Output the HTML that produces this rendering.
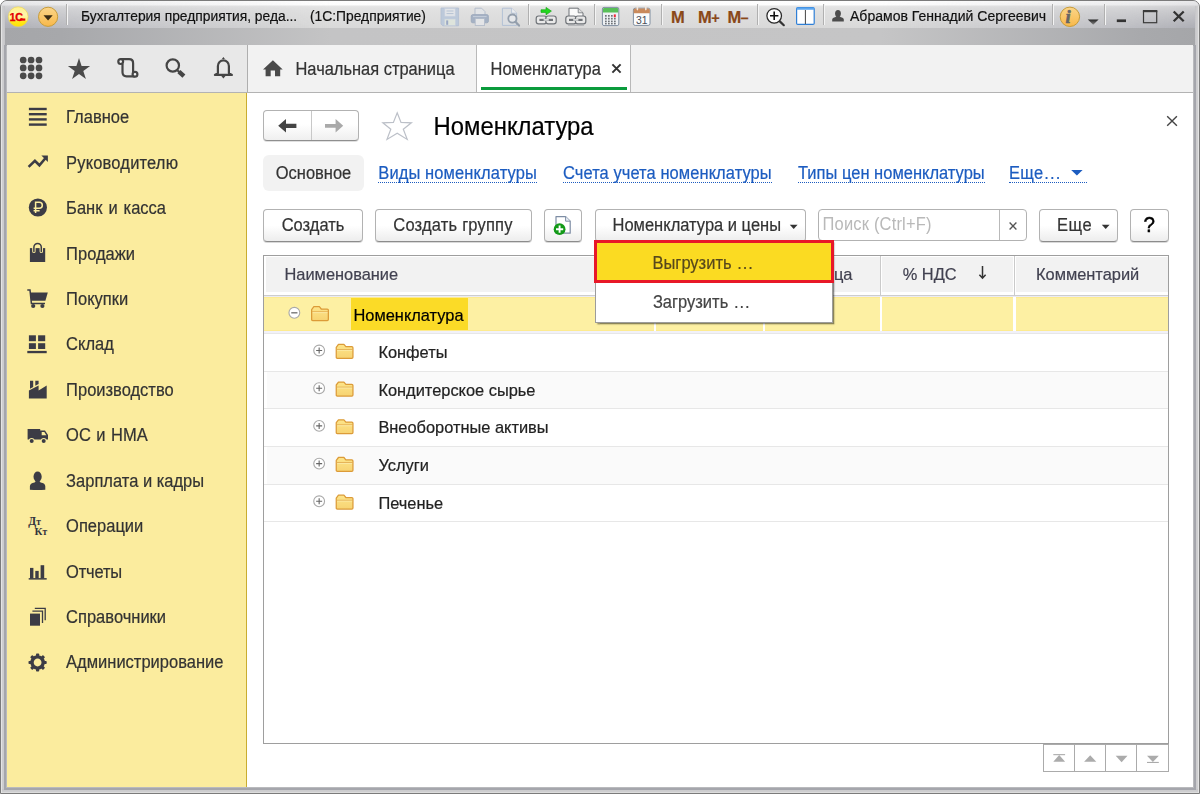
<!DOCTYPE html>
<html lang="ru">
<head>
<meta charset="utf-8">
<title>Номенклатура</title>
<style>
*{box-sizing:border-box;margin:0;padding:0}
html,body{width:1200px;height:794px;overflow:hidden;background:#fff}
body{font-family:"Liberation Sans",sans-serif;font-size:16.3px;color:#333;position:relative;-webkit-text-stroke:.2px}
.abs{position:absolute}
.t{display:inline-block;line-height:1.149;transform:scaleY(1.06);transform-origin:0 78.8%;white-space:nowrap}
#frame{position:absolute;left:0;top:0;width:1200px;height:794px;background:#b9babd;border:1px solid #7b7b7b;border-radius:7px 7px 0 0;overflow:hidden}
#frameL{position:absolute;left:0;top:5px;width:4px;height:787px;background:linear-gradient(90deg,#e4e4e4 0,#e4e4e4 1px,#cfcfd1 1px,#cbcbcd 3px,#c4c4c7 4px)}
#frameL2{position:absolute;left:3px;top:44px;width:1192.4px;height:745.4px;border:2.6px solid #a5a6ac;border-top:0}
#frameR{position:absolute;left:1194.4px;top:5px;width:3.6px;height:787px;background:linear-gradient(90deg,#c4c4c7 0,#cbcbcd 1px,#cfcfd1 2.6px,#e4e4e4 2.6px,#e4e4e4 3.6px)}
#frameB{position:absolute;left:1px;top:788px;width:1196px;height:4px;background:linear-gradient(180deg,#c4c4c7 0,#cbcbcd 1px,#cfcfd1 3px,#dcdcdc 3px,#dcdcdc 4px)}
#titleA{position:absolute;left:0;top:0;width:1198px;height:28px;background:linear-gradient(180deg,#fefefe 0,#fdfdfd 4px,#e6e6e6 5px,#e1e1e1 8px,#d9d9d9 27px)}
#titleAh{position:absolute;left:0;top:0;width:1198px;height:28px;background:linear-gradient(90deg,rgba(172,173,180,1) 0,rgba(178,179,186,.72) 70px,rgba(190,191,196,0) 330px,rgba(190,191,196,0) 880px,rgba(178,179,186,.72) 1130px,rgba(172,173,180,1) 1198px);-webkit-mask-image:linear-gradient(180deg,rgba(0,0,0,.25) 0,rgba(0,0,0,.35) 5px,#000 27px);mask-image:linear-gradient(180deg,rgba(0,0,0,.25) 0,rgba(0,0,0,.35) 5px,#000 27px)}
#titleB{position:absolute;left:0;top:27px;width:1198px;height:18px;background:linear-gradient(90deg,#a5a6a9 0,#a7a8ab 60px,#c4c4c5 330px,#c5c5c6 880px,#a8a9ac 1140px,#a5a6a9 1198px)}
.ttext{position:absolute;top:6.2px;font-size:15.2px;color:#111;white-space:nowrap;line-height:20px;transform:scaleX(.91);transform-origin:0 0}

#toolbar{position:absolute;left:6.5px;top:45.3px;width:1186.7px;height:47.8px;background:#f2f2f2;border-bottom:1px solid #b3b3b3}
#tbLeft{position:absolute;left:0;top:0;width:241.5px;height:47px;background:#e8e8e8;border-right:1px solid #aeaeae}
.tab{position:absolute;top:0;height:46.8px;font-size:16.45px;line-height:49.8px;white-space:nowrap;color:#333}
#tab2{left:469.6px;width:155.2px;background:#fff;border-left:1px solid #b9b9b9;border-right:1px solid #b9b9b9}
#tab2u{position:absolute;left:4px;top:42px;width:146px;height:2.4px;background:#0a9b3c}

#side{position:absolute;left:6.5px;top:93.1px;width:240.5px;height:694.4px;background:#fbec9e;border-right:1.5px solid #c9ad30}
.si{position:absolute;left:59.6px;margin-top:-0.6px;height:24px;line-height:24px;font-size:16.5px;color:#333;white-space:nowrap}
#main{position:absolute;left:247px;top:93px;width:946.2px;height:694px;background:#fff}
#nav{position:absolute;left:16px;top:16.5px;width:96px;height:31px;border:1px solid #b2b2b2;border-bottom-color:#8f8f8f;border-radius:4px;background:linear-gradient(180deg,#fff 0,#fff 45%,#efefef 100%);box-shadow:0 1px 0 rgba(0,0,0,.12)}
#navdiv{position:absolute;left:47px;top:0;width:1px;height:29px;background:#c8c8c8}
#ptitle{position:absolute;left:186.6px;top:18.9px;font-size:23.85px;line-height:30px;color:#000;white-space:nowrap}
#pill{position:absolute;left:16px;top:62px;width:101px;height:36px;border-radius:6px;background:#f2f2f2;text-align:center;line-height:36px;font-size:16.5px;color:#333}
.lnk{position:absolute;top:69px;height:20.8px;line-height:22px;font-size:16.5px;color:#1c5cc0;white-space:nowrap;border-bottom:1.3px dotted #1c5cc0}
.btn{position:absolute;top:115.5px;height:33px;border:1px solid #b2b2b2;border-bottom-color:#8c8c8c;border-radius:4px;background:linear-gradient(180deg,#fff 0,#fff 50%,#ededed 100%);box-shadow:0 1px 0 rgba(0,0,0,.15);text-align:center;line-height:30.4px;font-size:16.5px;color:#333;white-space:nowrap}
#search{position:absolute;left:571px;top:116px;width:208.5px;height:32px;border:1px solid #b2b2b2;border-radius:4px;background:#fff}
#search>span{position:absolute;left:3.6px;top:0;line-height:29px;font-size:16.5px;color:#b9b9b9;white-space:nowrap;letter-spacing:.17px;-webkit-text-stroke:0}
#sdiv{position:absolute;left:180px;top:0;width:1px;height:30px;background:#b9b9b9}
#table{position:absolute;left:15.7px;top:161.9px;width:906.7px;height:489.2px;border:1px solid #9e9e9e;background:#fff;overflow:hidden}
#tin{position:absolute;left:-.2px;top:.6px;width:905px;height:488px}
#thead{position:absolute;left:0;top:0;width:905px;height:37px;background:#fff}
.th{position:absolute;top:0;height:37px;line-height:34.8px;font-size:16.4px;color:#414150;white-space:nowrap;background:#f2f2f2;border:1px solid #fff;border-top-width:1.3px;border-bottom-width:.8px}
.thsep{position:absolute;top:0;width:1px;height:39px;background:#cacaca}
#hline{position:absolute;left:0;top:38.3px;width:905px;height:1.1px;background:#cdcdcd}
#hline2{position:absolute;left:0;top:39.4px;width:905px;height:1.4px;background:#ececf4}
#selrow{position:absolute;left:0;top:40.8px;width:904px;height:33.8px}
.sc{position:absolute;top:0;height:33.8px;background:#fdf0a3;box-shadow:inset 0 1px 0 #fdeb90,inset 0 -1px 0 #fdeb90}
#selcell{position:absolute;left:87.5px;top:1px;width:117px;height:32px;background:#fbdb27;line-height:34.7px;font-size:16.4px;color:#000;padding-left:2.5px;white-space:nowrap}
#sline{position:absolute;left:0;top:74.8px;width:905px;height:1.7px;background:#f1f1f9}
.tr{position:absolute;left:0;width:905px;height:37.65px;border-top:1px solid #e7e7e7;line-height:37.3px;font-size:16.4px;color:#222;padding-left:114.9px;white-space:nowrap}
.tr.alt{background:linear-gradient(90deg,#fff 0,#fff 2.5px,#fafafa 2.5px)}
#scrollbtns{position:absolute;left:795.7px;top:650.6px;width:126px;height:29px}
.sb{position:absolute;top:0;width:32.4px;height:28.3px;border:1.2px solid #ababab;border-right:0;background:#fff}
#menu{position:absolute;left:347.5px;top:147px;width:238.5px;height:82.5px;background:#fff;border:1px solid #9c9c9c;box-shadow:1.5px 1.5px 1.5px rgba(0,0,0,.45)}
#mi1{position:absolute;left:-1.4px;top:-0.7px;width:239.6px;height:42.3px;border:3px solid #e81828;background:#fbdb22;line-height:41.4px;padding-left:55.4px;word-spacing:1.2px;font-size:16.5px;color:#57481c;white-space:nowrap}
#mi2{position:absolute;left:0;top:41px;width:236px;height:40px;line-height:40.4px;padding-left:57.4px;word-spacing:1.2px;font-size:16.5px;color:#444;white-space:nowrap}
#titlec{position:absolute;left:0;top:0;width:1200px;height:46px}
.mtext{position:absolute;top:7px;font-size:16.5px;font-weight:bold;color:#8a4818;line-height:20px;white-space:nowrap;letter-spacing:-0.3px}
</style>
</head>
<body>
<div id="frame">
 <div id="titleA"></div><div id="titleAh"></div>
 <div id="titleB"></div>
 <div id="frameL"></div><div id="frameR"></div><div id="frameB"></div><div id="frameL2"></div>
 <!--TITLE-->
</div>
<div id="titlec">
<svg class="abs" style="left:0;top:0" width="1200" height="46" viewBox="0 0 1200 46">
<defs>
<linearGradient id="g1c" x1="0" y1="0" x2="0" y2="1"><stop offset="0" stop-color="#fff08a"/><stop offset="0.4" stop-color="#fff6aa"/><stop offset="0.68" stop-color="#fff080"/><stop offset="0.74" stop-color="#ffe81c"/><stop offset="1" stop-color="#ffe000"/></linearGradient>
<linearGradient id="gor" x1="0" y1="0" x2="0" y2="1"><stop offset="0" stop-color="#fbd68a"/><stop offset="1" stop-color="#f8b84a"/></linearGradient>
<linearGradient id="gtri" x1="0" y1="0" x2="0" y2="1"><stop offset="0" stop-color="#222"/><stop offset="1" stop-color="#888"/></linearGradient>
</defs>
<!-- 1C logo -->
<circle cx="18.2" cy="16.7" r="9.9" fill="url(#g1c)" stroke="#f0d64a" stroke-width="0.6"/>
<text x="9.6" y="20.8" font-family="Liberation Sans,sans-serif" font-weight="bold" font-size="11" fill="#e40000" stroke="#e40000" stroke-width="0.25">1</text>
<text x="15.2" y="20.6" font-family="Liberation Sans,sans-serif" font-weight="bold" font-size="10.6" fill="#e40000" stroke="#e40000" stroke-width="0.4">С</text>
<path d="M19.9 19.6 L25.3 19.6" fill="none" stroke="#e40000" stroke-width="2.2"/>
<!-- orange dropdown -->
<circle cx="48.1" cy="16.8" r="9.6" fill="url(#gor)" stroke="#c79c3a" stroke-width="1"/>
<path d="M43.5 15.2 L52.7 15.2 L48.1 20.5 Z" fill="#3a2c14"/>
<!-- separators -->
<g stroke="#b0b0b0" stroke-width="1"><path d="M66.5 4 V25 M528.5 4 V25 M594.5 4 V25 M661.5 4 V25 M757.5 4 V25 M823.5 4 V25 M1052.5 4 V25 M1104.5 4 V25"/></g>
<g stroke="#f4f4f4" stroke-width="1"><path d="M67.5 4 V25 M529.5 4 V25 M595.5 4 V25 M662.5 4 V25 M758.5 4 V25 M824.5 4 V25 M1053.5 4 V25 M1105.5 4 V25"/></g>
<!-- save (disabled) -->
<g opacity="0.85"><path d="M441 8 H458.6 V25.8 H442.8 L441 24 Z" fill="#b7c6da" stroke="#a9b9cf" stroke-width="0.8"/>
<rect x="444.8" y="8.6" width="10.4" height="7.6" fill="#e3e6ea" stroke="#c3cedd" stroke-width="0.6"/><path d="M446.5 11 H453.5 M446.5 13.6 H453.5" stroke="#aebdd2" stroke-width="1"/>
<rect x="444.6" y="19" width="10.8" height="6.4" fill="#dfe6dd" stroke="#c3cedd" stroke-width="0.6"/><rect x="446.2" y="20.4" width="2" height="4.4" fill="#8f9fc0"/></g>
<!-- print (disabled) -->
<g opacity="0.9"><path d="M475 15 V8.2 H481.6 L485 11.6 V15" fill="#e3e5e8" stroke="#aab5c6" stroke-width="0.9"/>
<rect x="471.2" y="14.6" width="17.2" height="8.2" rx="1.6" fill="#9fadc2" stroke="#93a2b8" stroke-width="0.8"/><path d="M473 16.6 H486.6" stroke="#c5cfdc" stroke-width="1"/>
<rect x="475.2" y="18.6" width="9.4" height="6.8" fill="#e4e6e9" stroke="#aab5c6" stroke-width="0.8"/></g>
<!-- preview (disabled) -->
<g opacity="0.9"><path d="M502.4 8.2 H511.6 L516.6 13.2 V25.4 H502.4 Z" fill="#dcdfe3" stroke="#a9bad2" stroke-width="0.9"/><path d="M511.6 8.2 V13.2 H516.6" fill="#eef0f3" stroke="#a9bad2" stroke-width="0.8"/>
<circle cx="512.4" cy="18.6" r="4.1" fill="#e8eaed" stroke="#8d99a8" stroke-width="1.8"/><path d="M515.4 21.8 L519 25.6" stroke="#8d99a8" stroke-width="2.2" stroke-linecap="round"/></g>
<!-- link with green arrow -->
<path d="M541 9.8 H546 V7.4 L551.4 11.1 L546 14.8 V12.4 H541 Z" fill="#22d81e" stroke="#18a818" stroke-width="0.7"/>
<g fill="#e9e9e9" stroke="#6f7378" stroke-width="1.2"><rect x="536.2" y="16" width="10.4" height="7.8" rx="2.4"/><rect x="545.8" y="16" width="10.4" height="7.8" rx="2.4"/></g>
<path d="M539.4 19.9 H553" stroke="#6f7378" stroke-width="2.2"/><path d="M543.6 19.9 H548.8" stroke="#f2f2f2" stroke-width="1.4"/>
<!-- link with doc -->
<path d="M569 17 V8.2 H578.2 L583 12.8 V17" fill="#fafafa" stroke="#6f7378" stroke-width="1"/><path d="M578.2 8.2 V12.8 H583" fill="#dedede" stroke="#6f7378" stroke-width="0.8"/>
<g fill="#e9e9e9" stroke="#6f7378" stroke-width="1.2"><rect x="565.8" y="16" width="10.4" height="7.8" rx="2.4"/><rect x="575.4" y="16" width="10.4" height="7.8" rx="2.4"/></g>
<path d="M569 19.9 H582.6" stroke="#6f7378" stroke-width="2.2"/><path d="M573.2 19.9 H578.4" stroke="#f2f2f2" stroke-width="1.4"/>
<path d="M568 25.2 H584" stroke="#9a9da2" stroke-width="0.8"/>
<!-- calculator -->
<rect x="602.4" y="7.4" width="16.4" height="18.2" rx="1.6" fill="#eef1f4" stroke="#7f8ea0" stroke-width="1"/>
<path d="M603 9 Q603 8 604 8 H617.2 Q618.2 8 618.2 9 V12.6 H603 Z" fill="#58bf58"/>
<g fill="#6f7378"><rect x="605" y="15" width="1.7" height="1.7"/><rect x="608" y="15" width="1.7" height="1.7"/><rect x="611" y="15" width="1.7" height="1.7"/>
<rect x="605" y="17.8" width="1.7" height="1.7"/><rect x="608" y="17.8" width="1.7" height="1.7"/><rect x="611" y="17.8" width="1.7" height="1.7"/><rect x="614" y="17.8" width="1.7" height="1.7"/>
<rect x="605" y="20.6" width="1.7" height="1.7"/><rect x="608" y="20.6" width="1.7" height="1.7"/><rect x="611" y="20.6" width="1.7" height="1.7"/><rect x="614" y="20.6" width="1.7" height="1.7"/>
<rect x="605" y="23" width="1.7" height="1.4"/><rect x="608" y="23" width="1.7" height="1.4"/><rect x="611" y="23" width="1.7" height="1.4"/><rect x="614" y="23" width="1.7" height="1.4"/></g>
<rect x="613.8" y="14.4" width="2" height="2.8" fill="#f0283a"/>
<!-- calendar -->
<rect x="633.4" y="8.2" width="16.6" height="17.2" rx="1.8" fill="#fbfcfd" stroke="#7f8ea0" stroke-width="1"/>
<path d="M633.6 13.2 V10 Q633.6 8.4 635.2 8.4 H648.2 Q649.8 8.4 649.8 10 V13.2 Z" fill="#c98a5c"/>
<path d="M637.4 6.6 V9.6 M645.8 6.6 V9.6" stroke="#f3e6da" stroke-width="1.6" stroke-linecap="round"/>
<text x="636" y="23.6" font-family="Liberation Sans,sans-serif" font-size="10.4" fill="#4a4f58">31</text>
<!-- zoom -->
<circle cx="774.2" cy="15.8" r="7.3" fill="#fdfdfd" stroke="#2a2a2a" stroke-width="1.25"/>
<path d="M770 15.8 H778.4 M774.2 11.6 V20" stroke="#111" stroke-width="1.6"/>
<path d="M779.8 21.4 L783.8 25.2" stroke="#333" stroke-width="2.2" stroke-linecap="round"/>
<!-- window -->
<rect x="796.6" y="7.6" width="17.6" height="16.8" rx="1.2" fill="#fff" stroke="#2f7fd6" stroke-width="1.2"/>
<path d="M796.6 9.8 V8.8 Q796.6 7.4 797.8 7.4 H813 Q814.2 7.4 814.2 8.8 V9.8 Z" fill="#5aa6f0"/>
<path d="M805.4 10 V24" stroke="#444" stroke-width="1"/>
<!-- user -->
<g fill="#4c4c4c"><ellipse cx="838" cy="13.6" rx="2.9" ry="3.5"/><path d="M832.2 21.6 V19.6 Q832.2 17.6 835.6 17 L836.6 16 H839.4 L840.4 17 Q843.8 17.6 843.8 19.6 V21.6 Z"/></g>
<!-- info -->
<circle cx="1069.9" cy="16.8" r="9.7" fill="url(#gor)" stroke="#c79c3a" stroke-width="1"/>
<text x="1065.6" y="23" font-family="Liberation Serif,serif" font-style="italic" font-weight="bold" font-size="18.5" fill="#666" stroke="#666" stroke-width="0.6">i</text>
<path d="M1087.8 19.4 H1098.6 L1093.2 24.8 Z" fill="url(#gtri)"/>
<!-- window controls -->
<rect x="1116.8" y="19.4" width="9.2" height="2.7" fill="#333"/>
<rect x="1143.5" y="11.4" width="13.2" height="11.3" fill="none" stroke="#3a3a3a" stroke-width="1.2"/><rect x="1142.9" y="10" width="14.4" height="2.2" fill="#3a3a3a"/>
<path d="M1173.7 11.5 L1183.7 21.3 M1183.7 11.5 L1173.7 21.3" stroke="#333" stroke-width="2.3"/>

</svg>
<div class="ttext" style="left:81px">Бухгалтерия предприятия, реда...</div>
<div class="ttext" style="left:309.5px">(1С:Предприятие)</div>
<div class="ttext" style="left:849.5px;transform:scaleX(.924)">Абрамов Геннадий Сергеевич</div>
<div class="mtext" style="left:671px">M</div>
<div class="mtext" style="left:698px">M<span style="font-size:14.5px;position:relative;top:-.4px;margin-left:-.3px">+</span></div>
<div class="mtext" style="left:727.5px">M<span style="font-size:14px;position:relative;top:-.2px;margin-left:-.6px">−</span></div>
</div>
<div id="toolbar">
 <div id="tbLeft"></div>
 <svg class="abs" style="left:0;top:0" width="300" height="47" viewBox="6.5 45.3 300 47">
<g fill="#4a4a4a">
<circle cx="22.7" cy="60.3" r="3.35"/><circle cx="30.6" cy="60.3" r="3.35"/><circle cx="38.5" cy="60.3" r="3.35"/>
<circle cx="22.7" cy="68.2" r="3.35"/><circle cx="30.6" cy="68.2" r="3.35"/><circle cx="38.5" cy="68.2" r="3.35"/>
<circle cx="22.7" cy="76.1" r="3.35"/><circle cx="30.6" cy="76.1" r="3.35"/><circle cx="38.5" cy="76.1" r="3.35"/>
<path d="M78.5 58.3 L81.1 66.3 L89.6 66.3 L82.8 71.3 L85.4 79.4 L78.5 74.4 L71.6 79.4 L74.2 71.3 L67.4 66.3 L75.9 66.3 Z"/>
<!-- home -->
<path d="M272.4 60.6 L282.2 69.7 L279.7 69.7 L279.7 76.5 L274.5 76.5 L274.5 70.8 L270.2 70.8 L270.2 76.5 L265.1 76.5 L265.1 69.7 L262.5 69.7 Z"/>
</g>
<g fill="none" stroke="#454545" stroke-width="2.2">
<!-- scroll -->
<path d="M120.2 59.5 L128.6 59.5 Q132.6 59.5 132.6 63.5 L132.6 72.4"/>
<path d="M134.6 76.6 L126 76.6 Q122 76.6 122 72.6 L122 64.2"/>
<circle cx="120.2" cy="61.9" r="2.4" fill="#f4f4f4"/><circle cx="134.5" cy="74.6" r="2.4" fill="#f4f4f4"/>
<!-- search -->
<circle cx="172.3" cy="65.8" r="6.2"/>
<path d="M177.2 70.9 L179 72.6" stroke-width="2.2"/><path d="M178.4 72 L183.4 76.5" stroke-width="4.4"/>
<!-- bell -->
<path d="M217.4 73.4 L217.4 66.2 A5.5 5.5 0 0 1 228.4 66.2 L228.4 73.4 L231.4 75.2 L214.4 75.2 Z" stroke-linejoin="round"/>
</g>
<path d="M221.4 59.2 L222.9 57.2 L224.4 59.2 Z M220.6 76 L225.2 76 L222.9 78.8 Z" fill="#454545"/>
</svg>
<div class="tab" style="left:289px"><span class="t">Начальная страница</span></div>
<div class="tab" id="tab2" style="padding-left:13.5px"><span class="t">Номенклатура</span><div id="tab2u"></div>
<svg class="abs" style="left:134px;top:18px" width="11" height="11" viewBox="0 0 11 11"><path d="M1.4 1.4 L9.6 9.6 M9.6 1.4 L1.4 9.6" stroke="#333" stroke-width="2" fill="none"/></svg></div>

</div>
<div id="side">
<div class="si" style="top:12.8px"><span class="t">Главное</span></div>
<div class="si" style="top:58.2px;letter-spacing:.17px"><span class="t">Руководителю</span></div>
<div class="si" style="top:103.6px;word-spacing:1.4px"><span class="t">Банк и касса</span></div>
<div class="si" style="top:149.1px"><span class="t">Продажи</span></div>
<div class="si" style="top:194.5px"><span class="t">Покупки</span></div>
<div class="si" style="top:239.9px"><span class="t">Склад</span></div>
<div class="si" style="top:285.3px"><span class="t">Производство</span></div>
<div class="si" style="top:330.7px;word-spacing:.9px"><span class="t">ОС и НМА</span></div>
<div class="si" style="top:376.2px"><span class="t">Зарплата и кадры</span></div>
<div class="si" style="top:421.6px"><span class="t">Операции</span></div>
<div class="si" style="top:467px;letter-spacing:-.2px"><span class="t">Отчеты</span></div>
<div class="si" style="top:512.4px"><span class="t">Справочники</span></div>
<div class="si" style="top:557.8px"><span class="t">Администрирование</span></div>
<svg class="abs" style="left:0;top:0" width="60" height="694" viewBox="7 93.1 60 694">
<g fill="#3c3c45" stroke="none">
<!-- hamburger -->
<rect x="28.9" y="107.9" width="17.8" height="2.4"/><rect x="28.9" y="113.1" width="17.8" height="2.4"/><rect x="28.9" y="118.3" width="17.8" height="2.4"/><rect x="28.9" y="123.5" width="17.8" height="2.4"/>
<!-- trend -->
<path d="M28.6 167 L34.9 161 L39.4 165.4 L45.2 158.6" fill="none" stroke="#3c3c45" stroke-width="2.6" stroke-linejoin="miter"/>
<path d="M41.4 155.6 L47.9 155.6 L47.9 162.2 Z"/>
<!-- ruble -->
<circle cx="37.9" cy="207.6" r="9.1"/>
<path d="M35.6 213.2 L35.6 202.4 L39.3 202.4 A3 3 0 0 1 39.3 208.4 L33.6 208.4 M33.6 210.9 L39.6 210.9" fill="none" stroke="#fbed9e" stroke-width="1.5"/>
<!-- bag -->
<rect x="29.9" y="248.2" width="15.3" height="13.9"/>
<path d="M33.9 251.5 L33.9 247.3 A3.7 3.7 0 0 1 41.3 247.3 L41.3 251.5" fill="none" stroke="#fbed9e" stroke-width="3.4" stroke-linecap="round"/>
<path d="M33.9 251.5 L33.9 247.3 A3.7 3.7 0 0 1 41.3 247.3 L41.3 251.5" fill="none" stroke="#3c3c45" stroke-width="1.5" stroke-linecap="round"/>
<!-- cart -->
<path d="M27.3 290.2 L30 290.2 L31.4 303.6 L45 303.6" fill="none" stroke="#3c3c45" stroke-width="1.5"/>
<path d="M30.2 292.6 L47.8 292.6 L45.4 300.9 L31 300.9 Z"/>
<circle cx="33.2" cy="306.1" r="2.1"/><circle cx="42.4" cy="306.1" r="2.1"/>
<!-- warehouse -->
<rect x="28.9" y="335.4" width="7" height="5.9"/><rect x="38.1" y="335.4" width="7.1" height="5.9"/><rect x="28.9" y="343.3" width="7" height="5.8"/><rect x="38.1" y="343.3" width="7.1" height="5.8"/><rect x="27.3" y="351" width="19.4" height="2.3"/>
<!-- factory -->
<path d="M28.9 398.7 L28.9 390.6 L38.6 385.6 L38.6 390.7 L46.7 385.6 L46.7 398.7 Z"/>
<path d="M30 380.9 L33.2 380.9 L33.2 387.2 L30 388.9 Z"/><path d="M35.3 380.9 L38.6 380.9 L38.6 384 L35.3 385.8 Z"/>
<!-- truck -->
<path d="M27.6 429 L40.2 429 L40.2 430.6 L45 430.6 L48 435 L48 439.7 L27.6 439.7 Z"/>
<path d="M41.7 432.2 L44.3 432.2 L46.4 435.4 L41.7 435.4 Z" fill="#fbed9e"/>
<circle cx="31.7" cy="441" r="2.9" fill="#fbed9e"/><circle cx="43.7" cy="441" r="2.9" fill="#fbed9e"/>
<circle cx="31.7" cy="441" r="2" /><circle cx="43.7" cy="441" r="2"/>
<!-- person -->
<ellipse cx="37.6" cy="476.8" rx="4.1" ry="5.1"/>
<path d="M29.9 489.8 L29.9 486.3 Q29.9 483.4 34.6 482.6 L35.8 481.2 L39.4 481.2 L40.6 482.6 Q45.3 483.4 45.3 486.3 L45.3 489.8 Q37.6 490.6 29.9 489.8 Z"/>
<!-- reports -->
<rect x="30" y="568" width="3.4" height="10.6"/><rect x="35.3" y="571" width="3.4" height="7.6"/><rect x="40.6" y="565.3" width="3.6" height="13.3"/><rect x="28.7" y="578.2" width="18" height="1.5"/>
<!-- docs -->
<rect x="30" y="613.7" width="10" height="12.1"/>
<path d="M32.4 611.2 L42.5 611.2 L42.5 623" fill="none" stroke="#3c3c45" stroke-width="1.3"/>
<path d="M34.8 608.5 L45.2 608.5 L45.2 620.4" fill="none" stroke="#3c3c45" stroke-width="1.3"/>
<!-- gear -->
<g transform="translate(37.6 662.6)">
<circle r="5.6" fill="none" stroke="#3c3c45" stroke-width="3.4"/>
<g id="tooth"><rect x="-1.6" y="-9.1" width="3.2" height="3" rx="0.8"/></g>
<use href="#tooth" transform="rotate(45)"/><use href="#tooth" transform="rotate(90)"/><use href="#tooth" transform="rotate(135)"/><use href="#tooth" transform="rotate(180)"/><use href="#tooth" transform="rotate(225)"/><use href="#tooth" transform="rotate(270)"/><use href="#tooth" transform="rotate(315)"/>
</g>
</g>
<text x="28.3" y="525.6" font-family="Liberation Serif,serif" font-weight="bold" font-size="11.5" fill="#33333c">Д<tspan font-size="9.5">т</tspan></text>
<text x="34.6" y="535.6" font-family="Liberation Serif,serif" font-weight="bold" font-size="11" fill="#33333c">К<tspan font-size="9.5">т</tspan></text>
</svg>

</div>
<div id="main">
<div id="nav"><div id="navdiv"></div>
<svg class="abs" style="left:-1px;top:-1px" width="96" height="31" viewBox="263 109.5 96 31"><path d="M278.2 125.3 L286 118.6 L286 123.2 L296.4 123.2 L296.4 127.4 L286 127.4 L286 132 Z" fill="#444"/><path d="M343.2 125.3 L335.6 118.6 L335.6 123.4 L325 123.4 L325 127.2 L335.6 127.2 L335.6 132 Z" fill="#a9a9a9"/></svg></div>
<svg class="abs" style="left:133px;top:17px" width="34" height="32" viewBox="380 110 34 32"><path d="M397.2 112.8 L401 122.4 L411.4 122.8 L403.3 129.3 L407.2 139.4 L397.2 133.2 L387 139.4 L390.8 129.3 L382.8 122.8 L393.4 122.4 Z" fill="#fff" stroke="#bcc0c8" stroke-width="1.2" stroke-linejoin="miter"/></svg>
<div id="ptitle"><span class="t">Номенклатура</span></div>
<svg class="abs" style="left:919px;top:22.4px" width="12" height="12" viewBox="0 0 12 12"><path d="M1.2 1.2 L10.9 10.8 M10.9 1.2 L1.2 10.8" stroke="#444" stroke-width="1.4" fill="none"/></svg>

<div id="pill"><span class="t">Основное</span></div>
<a class="lnk" style="left:131.3px;letter-spacing:.1px"><span class="t">Виды номенклатуры</span></a>
<a class="lnk" style="left:316px;letter-spacing:.06px"><span class="t">Счета учета номенклатуры</span></a>
<a class="lnk" style="left:551px"><span class="t">Типы цен номенклатуры</span></a>
<a class="lnk" style="left:762px;width:77.5px;letter-spacing:.3px"><span class="t">Еще<span style="letter-spacing:1.1px;margin-left:.8px">...</span></span></a>
<svg class="abs" style="left:823.6px;top:77px" width="12" height="6" viewBox="0 0 12 6"><path d="M0.2 0 L11.6 0 L5.9 5.6 Z" fill="#1c5cc0"/></svg>

<div class="btn" style="left:16px;width:100px"><span class="t">Создать</span></div>
<div class="btn" style="left:127.5px;width:157px;letter-spacing:.19px"><span class="t">Создать группу</span></div>
<div class="btn" style="left:297px;width:38px"></div>
<svg class="abs" style="left:305px;top:120px" width="24" height="24" viewBox="552 213 24 24">
<path d="M556 216.6 H565.6 L570.2 221.2 V233.2 H556 Z" fill="#fff" stroke="#7d8da4" stroke-width="1.2" stroke-linejoin="round"/><path d="M565.6 216.6 V221.2 H570.2" fill="#e8eef6" stroke="#7d8da4" stroke-width="1"/>
<circle cx="559.6" cy="229.2" r="5.9" fill="#139a18"/><path d="M556 229.2 H563.2 M559.6 225.6 V232.8" stroke="#fff" stroke-width="1.9"/>
</svg>

<div class="btn" style="left:347.5px;width:211.5px;text-align:left;padding-left:17px"><span class="t">Номенклатура и цены</span></div>
<svg class="abs" style="left:542px;top:131px" width="10" height="6" viewBox="0 0 10 6"><path d="M0.8 0.8 L8.6 0.8 L4.7 5 Z" fill="#333"/></svg>
<div id="search"><span><span class="t">Поиск (Ctrl+F)</span></span><div id="sdiv"></div>
<svg class="abs" style="left:189px;top:10.5px" width="10" height="10" viewBox="0 0 10 10"><path d="M1.6 1.6 L8.4 8.4 M8.4 1.6 L1.6 8.4" stroke="#555" stroke-width="1.35" fill="none"/></svg></div>
<div class="btn" style="left:792px;width:78.5px;text-align:left;padding-left:17px;letter-spacing:.6px"><span class="t">Еще</span></div>
<svg class="abs" style="left:854px;top:131px" width="10" height="6" viewBox="0 0 10 6"><path d="M0.8 0.8 L8.6 0.8 L4.7 5 Z" fill="#333"/></svg>
<div class="btn" style="left:883px;width:38.5px;color:#000;font-size:20.6px;-webkit-text-stroke:.45px"><span class="t">?</span></div>

<div id="table"><div id="tin">
 <div id="thead">
  <div class="th" style="left:0.0px;width:391.1px;padding-left:19px;border-left-width:2.3px"><span class="t">Наименование</span></div>
  <div class="th" style="left:391.1px;width:109.2px;"></div>
  <div class="th" style="left:500.3px;width:117.1px;text-align:right;padding-right:27.5px"><span class="t">ца</span></div>
  <div class="th" style="left:617.4px;width:133.6px;padding-left:20.8px"><span class="t">% НДС</span></div>
  <div class="th" style="left:751.0px;width:154.0px;padding-left:20.5px"><span class="t">Комментарий</span></div>
  <div class="thsep" style="left:390.6px"></div>
  <div class="thsep" style="left:499.8px"></div>
  <div class="thsep" style="left:616.9px"></div>
  <div class="thsep" style="left:750.5px"></div>
  <svg class="abs" style="left:713px;top:9px" width="11" height="16" viewBox="0 0 11 16"><path d="M5.5 1 L5.5 13 M2.4 9.8 L5.5 13.2 L8.6 9.8" stroke="#333" stroke-width="1.5" fill="none"/></svg>
 </div>
 <div id="hline"></div><div id="hline2"></div>
 <div id="selrow">
  <div class="sc" style="left:0.0px;width:390.1px"></div>
  <div class="sc" style="left:392.1px;width:107.2px"></div>
  <div class="sc" style="left:501.3px;width:115.1px"></div>
  <div class="sc" style="left:618.4px;width:131.6px"></div>
  <div class="sc" style="left:752.0px;width:153.0px"></div>
  <div id="selcell"><span class="t">Номенклатура</span></div>
 </div>
 <div id="sline"></div>
 <div class="tr" style="top:76.5px"><span class="t">Конфеты</span></div>
 <div class="tr alt" style="top:114.15px"><span class="t">Кондитерское сырье</span></div>
 <div class="tr" style="top:151.8px"><span class="t">Внеоборотные активы</span></div>
 <div class="tr alt" style="top:189.45px"><span class="t">Услуги</span></div>
 <div class="tr" style="top:227.1px"><span class="t">Печенье</span></div>
 <div class="tr" style="top:264.75px;height:1px"></div>
 <svg class="abs" style="left:0;top:0" width="120" height="270" viewBox="264.05 257 120 270">
<defs>
<linearGradient id="gf" x1="0" y1="0" x2="0" y2="1"><stop offset="0" stop-color="#fde58a"/><stop offset="1" stop-color="#f7d372"/></linearGradient>
<g id="folder"><path d="M0.7 3.6 L2.9 0.7 L8.4 0.7 L10.3 3 L16.3 3 Q17.4 3 17.4 4.1 L17.4 13.5 Q17.4 14.6 16.3 14.6 L1.8 14.6 Q0.7 14.6 0.7 13.5 Z" fill="url(#gf)" stroke="#dc9b38" stroke-width="1.25" stroke-linejoin="round"/><path d="M1 5.8 H17.2" stroke="#e3ac4c" stroke-width="1"/><path d="M1.6 6.6 H16.6" stroke="#fdeeb0" stroke-width="0.8"/></g>
<g id="plus"><circle r="5.4" fill="#fff" stroke="#a9a9a9" stroke-width="1.1"/><path d="M-3 0 H3 M0 -3 V3" stroke="#666" stroke-width="1.1"/></g>
</defs>
<g transform="translate(294.4 313.8)"><circle r="5.4" fill="#fff" stroke="#a9a9a9" stroke-width="1.1"/><path d="M-3.1 0 H3.1" stroke="#777" stroke-width="1.4"/></g>
<use href="#folder" x="311" y="307"/>
<use href="#plus" x="319.2" y="351.5"/><use href="#folder" x="335.6" y="344.7"/>
<use href="#plus" x="319.2" y="389.2"/><use href="#folder" x="335.6" y="382.4"/>
<use href="#plus" x="319.2" y="426.9"/><use href="#folder" x="335.6" y="420.1"/>
<use href="#plus" x="319.2" y="464.6"/><use href="#folder" x="335.6" y="457.8"/>
<use href="#plus" x="319.2" y="502.3"/><use href="#folder" x="335.6" y="495.5"/>
</svg>

</div></div>
<div id="scrollbtns">
 <div class="sb" style="left:0"></div><div class="sb" style="left:31.2px"></div><div class="sb" style="left:62.4px"></div><div class="sb" style="left:93.6px;border-right:1.2px solid #ababab"></div>
 <svg class="abs" style="left:0;top:0" width="126" height="28" viewBox="1042.7 743.6 126 28">
<g fill="#ababab"><rect x="1053" y="753.7" width="11.8" height="1.1"/><path d="M1058.9 754.6 L1064.8 761.3 L1053 761.3 Z"/>
<path d="M1089.9 754.9 L1096 761.3 L1083.8 761.3 Z"/>
<path d="M1115.4 755.4 L1127.2 755.4 L1121.3 761.8 Z"/>
<path d="M1146.7 755.4 L1158.5 755.4 L1152.6 761.6 Z"/><rect x="1146.7" y="761.5" width="11.8" height="1.1"/></g>
</svg>

</div>

<div id="menu">
 <div id="mi1"><span class="t">Выгрузить <span style="letter-spacing:.9px">...</span></span></div>
 <div id="mi2"><span class="t">Загрузить <span style="letter-spacing:.9px">...</span></span></div>
</div>

</div>
</body>
</html>
